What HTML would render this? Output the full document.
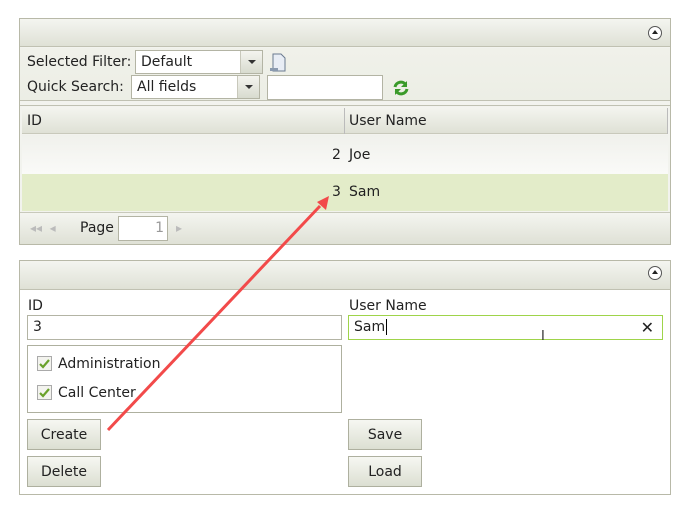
<!DOCTYPE html>
<html><head><style>
*{box-sizing:border-box;margin:0;padding:0}
body{width:690px;height:512px;background:#fff;font-family:"DejaVu Sans","Liberation Sans",sans-serif;font-size:14px;color:#222;position:relative;overflow:hidden}
.a{position:absolute}
.hdr{background:linear-gradient(#f4f5f0,#dfe1d6);}
.box{border:1px solid #b8b9a8}
.inp{position:absolute;background:#fff;border:1px solid #b3b4a4;padding-left:5px;line-height:23px;font-size:14px}
.btn{position:absolute;border:1px solid #aeb09f;background:linear-gradient(#f6f7f2,#dcdfd2);text-align:center;font-size:14px;line-height:31px;width:74px;height:31px}
.col{position:absolute;width:22px;top:0;bottom:0;right:0;border-left:1px solid #c8c8bb;background:linear-gradient(#f4f4ef,#d8dbcf)}
.col:after{content:"";position:absolute;left:7px;top:9px;border:4px solid transparent;border-top:4px solid #333}
.circ{position:absolute;width:14px;height:14px;border-radius:50%;border:1px solid #555;background:#fff}
.circ:after{content:"";position:absolute;left:3px;top:3px;border:3px solid transparent;border-bottom:4px solid #222;border-top:0}
.chk{position:absolute;width:15px;height:15px;border:1px solid #aaa;background:#f3f3ee}
</style></head><body>
<div class="a box" style="left:19px;top:18px;width:652px;height:227px;background:#f2f3ee"></div>
<div class="a hdr" style="left:20px;top:19px;width:650px;height:28px;border-bottom:1px solid #c0c1b2"></div>
<div class="circ" style="left:648px;top:26px"></div>
<div class="a" style="left:20px;top:48px;width:650px;height:53px;background:linear-gradient(#f0f1ea,#eceee5);border-bottom:1px solid #c0c1b2"></div>
<div class="a" style="left:27px;top:54px">Selected Filter:</div>
<div class="inp" style="left:135px;top:50px;width:128px;height:24px">Default<div class="col"></div></div>
<svg class="a" style="left:268px;top:52px" width="20" height="22"><path d="M5 2h8l4 4v13H5z" fill="#e8edf5" stroke="#6a7a90"/><path d="M2 16h8v3H2z" fill="#8a9aaf"/></svg>
<div class="a" style="left:27px;top:79px">Quick Search:</div>
<div class="inp" style="left:131px;top:75px;width:129px;height:24px">All fields<div class="col"></div></div>
<div class="inp" style="left:267px;top:75px;width:116px;height:25px"></div>
<svg class="a" style="left:392px;top:79px" width="18" height="18"><path d="M3 8a6 6 0 0 1 11-2" stroke="#3a9a2a" stroke-width="3" fill="none"/><path d="M15 2v6h-6z" fill="#3a9a2a"/><path d="M15 10a6 6 0 0 1-11 2" stroke="#3a9a2a" stroke-width="3" fill="none"/><path d="M3 16v-6h6z" fill="#3a9a2a"/></svg>
<div class="a" style="left:20px;top:105px;width:650px;height:1px;background:#c0c1b2"></div>
<div class="a hdr" style="left:22px;top:107px;width:646px;height:27px;border-bottom:1px solid #c8c9bb"></div>
<div class="a" style="left:344px;top:108px;width:1px;height:26px;background:#bbb"></div>
<div class="a" style="left:667px;top:108px;width:1px;height:26px;background:#bbb"></div>
<div class="a" style="left:27px;top:113px">ID</div>
<div class="a" style="left:349px;top:113px">User Name</div>
<div class="a" style="left:22px;top:135px;width:646px;height:39px;background:linear-gradient(#f0f1ec,#fafaf8)"></div>
<div class="a" style="left:22px;top:174px;width:646px;height:37px;background:#e3ecc9"></div>
<div class="a" style="left:332px;top:147px">2</div>
<div class="a" style="left:349px;top:147px">Joe</div>
<div class="a" style="left:332px;top:184px">3</div>
<div class="a" style="left:349px;top:184px">Sam</div>
<div class="a hdr" style="left:20px;top:212px;width:650px;height:32px;border-top:1px solid #c8c9bb"></div>
<div class="a" style="left:30px;top:221px;color:#bbb;font-size:12px">◂◂ &nbsp;◂</div>
<div class="a" style="left:80px;top:220px">Page</div>
<div class="inp" style="left:118px;top:216px;width:50px;height:25px;text-align:right;padding-right:3px;color:#999">1</div>
<div class="a" style="left:176px;top:221px;color:#bbb;font-size:12px">▸</div>
<div class="a box" style="left:19px;top:260px;width:652px;height:235px;background:#fff"></div>
<div class="a hdr" style="left:20px;top:261px;width:650px;height:29px;border-bottom:1px solid #c0c1b2"></div>
<div class="circ" style="left:648px;top:266px"></div>
<div class="a" style="left:28px;top:298px">ID</div>
<div class="inp" style="left:27px;top:315px;width:315px;height:25px">3</div>
<div class="a" style="left:349px;top:298px">User Name</div>
<div class="inp" style="left:348px;top:315px;width:315px;height:25px;border:1px solid #9fd44a">Sam<span style="border-left:1px solid #000;margin-left:1px"></span><span style="position:absolute;right:8px;top:0;font-size:16px">✕</span></div>
<div class="a" style="left:541px;top:329px;font-size:13px;color:#333">I</div>
<div class="a" style="left:27px;top:345px;width:315px;height:68px;border:1px solid #aeb09f"></div>
<div class="chk" style="left:37px;top:356px"><svg width="13" height="13" style="position:absolute;left:0;top:0"><path d="M2 7l3 3 6-7" stroke="#6aa12a" stroke-width="2.2" fill="none"/></svg></div>
<div class="a" style="left:58px;top:356px;font-size:14px">Administration</div>
<div class="chk" style="left:37px;top:385px"><svg width="13" height="13" style="position:absolute;left:0;top:0"><path d="M2 7l3 3 6-7" stroke="#6aa12a" stroke-width="2.2" fill="none"/></svg></div>
<div class="a" style="left:58px;top:385px;font-size:14px">Call Center</div>
<div class="btn" style="left:27px;top:419px">Create</div>
<div class="btn" style="left:27px;top:456px">Delete</div>
<div class="btn" style="left:348px;top:419px">Save</div>
<div class="btn" style="left:348px;top:456px">Load</div>
<svg class="a" style="left:0;top:0" width="690" height="512"><line x1="108" y1="430" x2="320" y2="206" stroke="#f24a4a" stroke-width="3"/><path d="M329 196l-3 14-9-8z" fill="#f24a4a"/></svg>
</body></html>
